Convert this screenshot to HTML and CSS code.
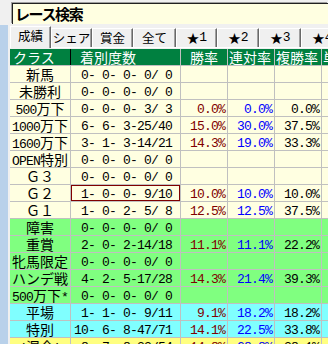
FILE: index.html
```html
<!DOCTYPE html>
<html lang="ja">
<head>
<meta charset="utf-8">
<title>レース検索</title>
<link rel="stylesheet" href="styles.css">
</head>
<body>
<div class="window">
  <div class="titlebar"><div class="title-box">レース検索</div></div>
  <div class="main">
    <div class="strip"></div>
    <div class="panel">
      <div class="tabs">
        <div class="tab active w41">成績</div>
        <div class="tab w41">シェア</div>
        <div class="tab w41">賞金</div>
        <div class="tab w43">全て</div>
        <div class="tab w41">★<span class="hw">1</span></div>
        <div class="tab">★<span class="hw">2</span></div>
        <div class="tab">★<span class="hw">3</span></div>
        <div class="tab">★<span class="hw">4</span></div>
      </div>
      <div class="grid">
        <div class="row head">
          <div class="h-class">クラス</div><div class="h-count">着別度数</div><div class="h-win">勝率</div><div class="h-pl">連対率</div><div class="h-pl">複勝率</div><div class="h-pl">単勝回収率</div>
        </div>
        <div class="row cream">
          <div class="lbl">新馬</div><div class="cnt"> 0- 0- 0- 0/ 0</div><div></div><div></div><div></div><div></div>
        </div>
        <div class="row cream">
          <div class="lbl">未勝利</div><div class="cnt"> 0- 0- 0- 0/ 0</div><div></div><div></div><div></div><div></div>
        </div>
        <div class="row cream">
          <div class="lbl"><span class="hw">500</span>万下</div><div class="cnt"> 0- 0- 0- 3/ 3</div><div class="pct win">0.0%</div><div class="pct ren">0.0%</div><div class="pct fuku">0.0%</div><div></div>
        </div>
        <div class="row cream">
          <div class="lbl"><span class="hw">1000</span>万下</div><div class="cnt"> 6- 6- 3-25/40</div><div class="pct win">15.0%</div><div class="pct ren">30.0%</div><div class="pct fuku">37.5%</div><div></div>
        </div>
        <div class="row cream">
          <div class="lbl"><span class="hw">1600</span>万下</div><div class="cnt"> 3- 1- 3-14/21</div><div class="pct win">14.3%</div><div class="pct ren">19.0%</div><div class="pct fuku">33.3%</div><div></div>
        </div>
        <div class="row cream">
          <div class="lbl"><span class="hw">OPEN</span>特別</div><div class="cnt"> 0- 0- 0- 0/ 0</div><div></div><div></div><div></div><div></div>
        </div>
        <div class="row cream">
          <div class="lbl">Ｇ３</div><div class="cnt"> 0- 0- 0- 0/ 0</div><div></div><div></div><div></div><div></div>
        </div>
        <div class="row cream">
          <div class="lbl">Ｇ２</div><div class="cnt sel"> 1- 0- 0- 9/10</div><div class="pct win">10.0%</div><div class="pct ren">10.0%</div><div class="pct fuku">10.0%</div><div></div>
        </div>
        <div class="row cream">
          <div class="lbl">Ｇ１</div><div class="cnt"> 1- 0- 2- 5/ 8</div><div class="pct win">12.5%</div><div class="pct ren">12.5%</div><div class="pct fuku">37.5%</div><div></div>
        </div>
        <div class="row green">
          <div class="lbl">障害</div><div class="cnt"> 0- 0- 0- 0/ 0</div><div></div><div></div><div></div><div></div>
        </div>
        <div class="row green">
          <div class="lbl">重賞</div><div class="cnt"> 2- 0- 2-14/18</div><div class="pct win">11.1%</div><div class="pct ren">11.1%</div><div class="pct fuku">22.2%</div><div></div>
        </div>
        <div class="row green">
          <div class="lbl">牝馬限定</div><div class="cnt"> 0- 0- 0- 0/ 0</div><div></div><div></div><div></div><div></div>
        </div>
        <div class="row green">
          <div class="lbl">ハンデ戦</div><div class="cnt"> 4- 2- 5-17/28</div><div class="pct win">14.3%</div><div class="pct ren">21.4%</div><div class="pct fuku">39.3%</div><div></div>
        </div>
        <div class="row green">
          <div class="lbl"><span class="hw">500</span>万下<span class="hw">*</span></div><div class="cnt"> 0- 0- 0- 0/ 0</div><div></div><div></div><div></div><div></div>
        </div>
        <div class="row cyan">
          <div class="lbl">平場</div><div class="cnt"> 1- 1- 0- 9/11</div><div class="pct win">9.1%</div><div class="pct ren">18.2%</div><div class="pct fuku">18.2%</div><div></div>
        </div>
        <div class="row cyan">
          <div class="lbl">特別</div><div class="cnt">10- 6- 8-47/71</div><div class="pct win">14.1%</div><div class="pct ren">22.5%</div><div class="pct fuku">33.8%</div><div></div>
        </div>
        <div class="row yellow">
          <div class="lbl"><span class="hw">(</span>混合<span class="hw">)</span></div><div class="cnt"> 8- 7- 8-33/54</div><div class="pct win">14.8%</div><div class="pct ren">28.8%</div><div class="pct fuku">38.1%</div><div></div>
        </div>
      </div>
    </div>
  </div>
</div>
</body>
</html>
```

FILE: styles.css
```css
html, body {
  margin: 0;
  padding: 0;
}
body {
  width: 328px;
  height: 344px;
  overflow: hidden;
  background: #f0f0f0;
  font-family: "Noto Sans CJK JP", sans-serif;
  font-size: 14px;
  color: #000;
}
.window {
  display: flex;
  flex-direction: column;
  height: 344px;
}
.titlebar {
  height: 25px;
  box-sizing: border-box;
  padding: 3px 0 0 12px;
  flex: none;
}
.title-box {
  height: 21px;
  box-sizing: border-box;
  background: #ffffe1;
  border-top: 1px solid #202020;
  border-left: 1px solid #202020;
  box-shadow: -1px -1px 0 #a0a0a0;
  padding-left: 2px;
  font-weight: bold;
  font-size: 15px;
  line-height: 19px;
  letter-spacing: -1.4px;
  white-space: nowrap;
}
.main {
  display: flex;
  flex: 1;
  min-height: 0;
}
.strip {
  width: 8px;
  flex: none;
  background: #b9d1ea;
}
.panel {
  flex: 1;
  min-width: 0;
  padding-left: 2px;
  overflow: hidden;
}
.tabs {
  display: flex;
  align-items: flex-end;
  height: 22px;
  border-bottom: 1px solid #ffffff;
}
.tab {
  flex: none;
  width: 42px;
  height: 19px;
  box-sizing: border-box;
  background: #f0f0f0;
  border-top: 1px solid #ffffff;
  border-left: 1px solid #ffffff;
  border-right: 1px solid #696969;
  box-shadow: inset -1px 0 0 #a0a0a0;
  display: flex;
  align-items: center;
  justify-content: center;
  font-size: 12.5px;
  line-height: 1;
  white-space: nowrap;
}
.tab.w41 { width: 41px; }
.tab.w43 { width: 43px; }
.tab.active {
  height: 22px;
  margin-bottom: -1px;
  padding-bottom: 2px;
}
.hw {
  font-family: "Liberation Mono", monospace;
  letter-spacing: -0.8px;
  font-size: 13px;
  line-height: 10px;
}
.grid {
  margin-top: 1px;
  display: grid;
  grid-template-columns: 60px 109px 46px 46px 46px 60px;
  grid-auto-rows: 16px;
  gap: 1px;
  background: #c0c0c0;
  width: max-content;
}
.row {
  display: contents;
}
.row > div {
  height: 16px;
  box-sizing: border-box;
  line-height: 16px;
  white-space: pre;
  overflow: hidden;
}
.head > div {
  background: #008040;
  color: #ffffff;
  font-size: 14px;
  padding-left: 1px;
}
.head .h-class {
  padding-left: 3px;
  box-shadow: 1px 0 0 #000000;
}
.head .h-count { padding-left: 9px; }
.head .h-win { padding-left: 9px; }
.head .h-pl { padding-left: 1px; }
.cream > div { background: #ffffe1; }
.green > div { background: #80ff80; }
.cyan > div { background: #80ffff; }
.yellow > div { background: #ffff80; }
.row > .lbl {
  text-align: center;
  font-size: 14px;
}
.row > .cnt,
.row > .pct {
  font-family: "Liberation Mono", monospace;
  font-size: 13px;
  letter-spacing: -0.8px;
  padding-top: 4px;
  line-height: 12px;
}
.row > .cnt {
  padding-left: 3px;
}
.row > .pct {
  text-align: right;
  padding-right: 2px;
}
.win { color: #800000; }
.ren { color: #0000ff; }
.fuku { color: #000000; }
.sel {
  box-shadow: inset 0 0 0 1px #800000;
}
```
